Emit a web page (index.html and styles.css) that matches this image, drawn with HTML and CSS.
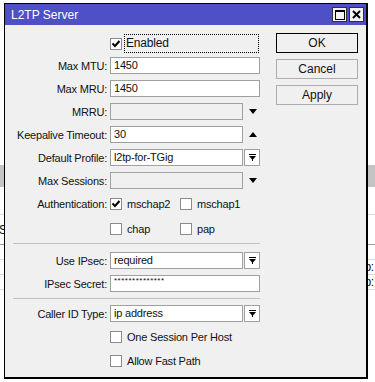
FILE: index.html
```html
<!DOCTYPE html>
<html>

<head>
    <title>L2TP Server</title>
    <link rel="stylesheet" href="styles.css">
</head>

<body>
    <!-- list behind the dialog -->
    <div class="desk">
        <div class="desk-head"></div>
        <div class="desk-row tall"></div>
        <div class="desk-row tall dark"><span class="cut-left">Se</span></div>
        <div class="desk-row"></div>
        <div class="desk-row"><span></span><span class="cut-right">p:</span></div>
        <div class="desk-row"><span></span><span class="cut-right">p:</span></div>
    </div>

    <div class="window">
        <div class="titlebar">
            <span class="title">L2TP Server</span>
            <div class="tbtns">
                <div class="tbtn">
                    <svg width="10" height="10" viewBox="0 0 10 10"><rect x="0.5" y="0.5" width="9" height="9" fill="none" stroke="#000"/><rect x="0" y="0" width="10" height="2" fill="#000"/></svg>
                </div>
                <div class="tbtn">
                    <svg width="9" height="9" viewBox="0 0 9 9"><path d="M1 1 L8 8 M8 1 L1 8" stroke="#000" stroke-width="2"/></svg>
                </div>
            </div>
        </div>

        <div class="content">
            <div class="form">
                <div class="row row-enabled">
                    <div class="label"></div>
                    <span class="check on"><svg width="10" height="10" viewBox="0 0 10 10"><path d="M1.5 4.5 L4 7 L8.5 2" fill="none" stroke="#000" stroke-width="2"/></svg></span>
                    <span class="focus">Enabled</span>
                </div>
                <div class="row">
                    <div class="label">Max MTU:</div>
                    <div class="field">1450</div>
                </div>
                <div class="row">
                    <div class="label">Max MRU:</div>
                    <div class="field">1450</div>
                </div>
                <div class="row">
                    <div class="label">MRRU:</div>
                    <div class="field short off"></div>
                    <span class="arrow"><svg width="8" height="5" viewBox="0 0 8 5"><polygon points="0,0 8,0 4,5" fill="#000"/></svg></span>
                </div>
                <div class="row">
                    <div class="label">Keepalive Timeout:</div>
                    <div class="field short">30</div>
                    <span class="arrow"><svg width="8" height="5" viewBox="0 0 8 5"><polygon points="0,5 8,5 4,0" fill="#000"/></svg></span>
                </div>
                <div class="row">
                    <div class="label">Default Profile:</div>
                    <div class="field short">l2tp-for-TGig</div>
                    <div class="pick"><svg width="7" height="7" viewBox="0 0 7 7"><rect x="0" y="0" width="7" height="1" fill="#000"/><polygon points="0,2 7,2 3.5,6" fill="#000"/><rect x="3" y="5" width="1" height="2" fill="#000"/></svg></div>
                </div>
                <div class="row">
                    <div class="label">Max Sessions:</div>
                    <div class="field short off"></div>
                    <span class="arrow"><svg width="8" height="5" viewBox="0 0 8 5"><polygon points="0,0 8,0 4,5" fill="#000"/></svg></span>
                </div>
                <div class="row row-auth">
                    <div class="label">Authentication:</div>
                    <div class="opt"><span class="check on"><svg width="10" height="10" viewBox="0 0 10 10"><path d="M1.5 4.5 L4 7 L8.5 2" fill="none" stroke="#000" stroke-width="2"/></svg></span>mschap2</div>
                    <div class="opt"><span class="check"></span>mschap1</div>
                </div>
                <div class="row">
                    <div class="label"></div>
                    <div class="opt"><span class="check"></span>chap</div>
                    <div class="opt"><span class="check"></span>pap</div>
                </div>

                <div class="sep"></div>

                <div class="row">
                    <div class="label">Use IPsec:</div>
                    <div class="field short">required</div>
                    <div class="pick"><svg width="7" height="7" viewBox="0 0 7 7"><rect x="0" y="0" width="7" height="1" fill="#000"/><polygon points="0,2 7,2 3.5,6" fill="#000"/><rect x="3" y="5" width="1" height="2" fill="#000"/></svg></div>
                </div>
                <div class="row">
                    <div class="label">IPsec Secret:</div>
                    <div class="field secret">**************</div>
                </div>

                <div class="sep sep2"></div>

                <div class="row">
                    <div class="label">Caller ID Type:</div>
                    <div class="field short">ip address</div>
                    <div class="pick"><svg width="7" height="7" viewBox="0 0 7 7"><rect x="0" y="0" width="7" height="1" fill="#000"/><polygon points="0,2 7,2 3.5,6" fill="#000"/><rect x="3" y="5" width="1" height="2" fill="#000"/></svg></div>
                </div>
                <div class="row row-opt">
                    <div class="label"></div>
                    <div class="opt wide"><span class="check"></span>One Session Per Host</div>
                </div>
                <div class="row">
                    <div class="label"></div>
                    <div class="opt wide"><span class="check"></span>Allow Fast Path</div>
                </div>
            </div>

            <div class="actions">
                <div class="btn default">OK</div>
                <div class="btn">Cancel</div>
                <div class="btn">Apply</div>
            </div>
        </div>
    </div>
</body>

</html>
```

FILE: styles.css
```css
body {
    margin: 0;
    height: 382px;
    overflow: hidden;
    position: relative;
    background-color: white;
    font-family: "Liberation Sans", Arial, sans-serif;
    font-size: 11px;
    letter-spacing: -0.2px;
    color: #111;
}

/* list behind */
.desk {
    padding-top: 165px;
}

.desk-head {
    height: 22px;
    background-color: #c4c4c4;
}

.desk-row {
    display: flex;
    justify-content: space-between;
    align-items: center;
    height: 14px;
    border-bottom: 1px solid #dcdcdc;
}

.desk-row.tall {
    height: 27px;
}

.desk-row.dark {
    height: 29px;
    border-bottom-color: #a0a0a0;
}

.cut-left {
    margin-left: -1px;
    font-size: 12px;
}

.cut-right {
    margin-right: 1px;
    font-size: 12px;
}

/* dialog */
.window {
    position: absolute;
    left: 4px;
    top: 3px;
    width: 364px;
    height: 376px;
    box-sizing: border-box;
    border: 1px solid #000;
    border-right-width: 2px;
    border-bottom-width: 2px;
    background-color: #f0f0f0;
}

.titlebar {
    display: flex;
    align-items: center;
    height: 21px;
    background-color: #5050c6;
    color: white;
    padding-left: 6px;
}

.title {
    font-size: 12px;
    letter-spacing: 0;
}

.tbtns {
    margin-left: auto;
    display: flex;
    gap: 2px;
    padding-right: 2px;
}

.tbtn {
    width: 15px;
    height: 15px;
    box-sizing: border-box;
    background-color: #f4f4f4;
    border: 1px solid #303030;
    display: flex;
    align-items: center;
    justify-content: center;
}

.content {
    display: flex;
    align-items: flex-start;
}

.form {
    width: 255px;
    padding-top: 9px;
}

.row {
    display: flex;
    align-items: center;
    height: 17px;
    margin-bottom: 6px;
}

.row-enabled {
    height: 19px;
    margin-bottom: 4px;
}

.row-auth {
    margin-bottom: 8px;
}

.row-opt {
    margin-bottom: 7px;
}

.label {
    width: 102px;
    flex-shrink: 0;
    margin-right: 3px;
    text-align: right;
    white-space: nowrap;
}

.field {
    width: 150px;
    height: 17px;
    box-sizing: border-box;
    border: 1px solid #a0a0a0;
    background-color: white;
    padding-left: 3px;
    line-height: 15px;
}

.field.short {
    width: 133px;
}

.field.off {
    background-color: #f0f0f0;
}

.field.secret {
    font-size: 8px;
    line-height: 10px;
    letter-spacing: 0.5px;
}

.arrow {
    display: flex;
    margin-left: 6px;
}

.pick {
    width: 16px;
    height: 17px;
    box-sizing: border-box;
    margin-left: 1px;
    border: 1px solid #a0a0a0;
    background-color: white;
    display: flex;
    align-items: center;
    justify-content: center;
}

.check {
    width: 12px;
    height: 12px;
    flex-shrink: 0;
    box-sizing: border-box;
    border: 1px solid #8c8c8c;
    background-color: white;
    display: flex;
    align-items: center;
    justify-content: center;
    margin-right: 5px;
}

.row-enabled .check {
    margin-right: 2px;
}

.focus {
    width: 135px;
    height: 19px;
    box-sizing: border-box;
    border: 1px dotted #000;
    padding-left: 1px;
    font-size: 12px;
    line-height: 17px;
}

.opt {
    display: flex;
    align-items: center;
    width: 70px;
    white-space: nowrap;
}

.opt.wide {
    width: auto;
}

.sep {
    height: 1px;
    margin: 5px 0 8px 8px;
    background-color: #c0c0c0;
}

.sep2 {
    margin: 0 0 6px 8px;
}

.actions {
    width: 82px;
    margin-left: 16px;
    padding-top: 8px;
}

.btn {
    height: 20px;
    box-sizing: border-box;
    margin-bottom: 6px;
    border: 1px solid #adadad;
    background-color: #f0f0f0;
    text-align: center;
    line-height: 18px;
    font-size: 12px;
    letter-spacing: 0;
}

.btn.default {
    border-color: #000;
}
```
